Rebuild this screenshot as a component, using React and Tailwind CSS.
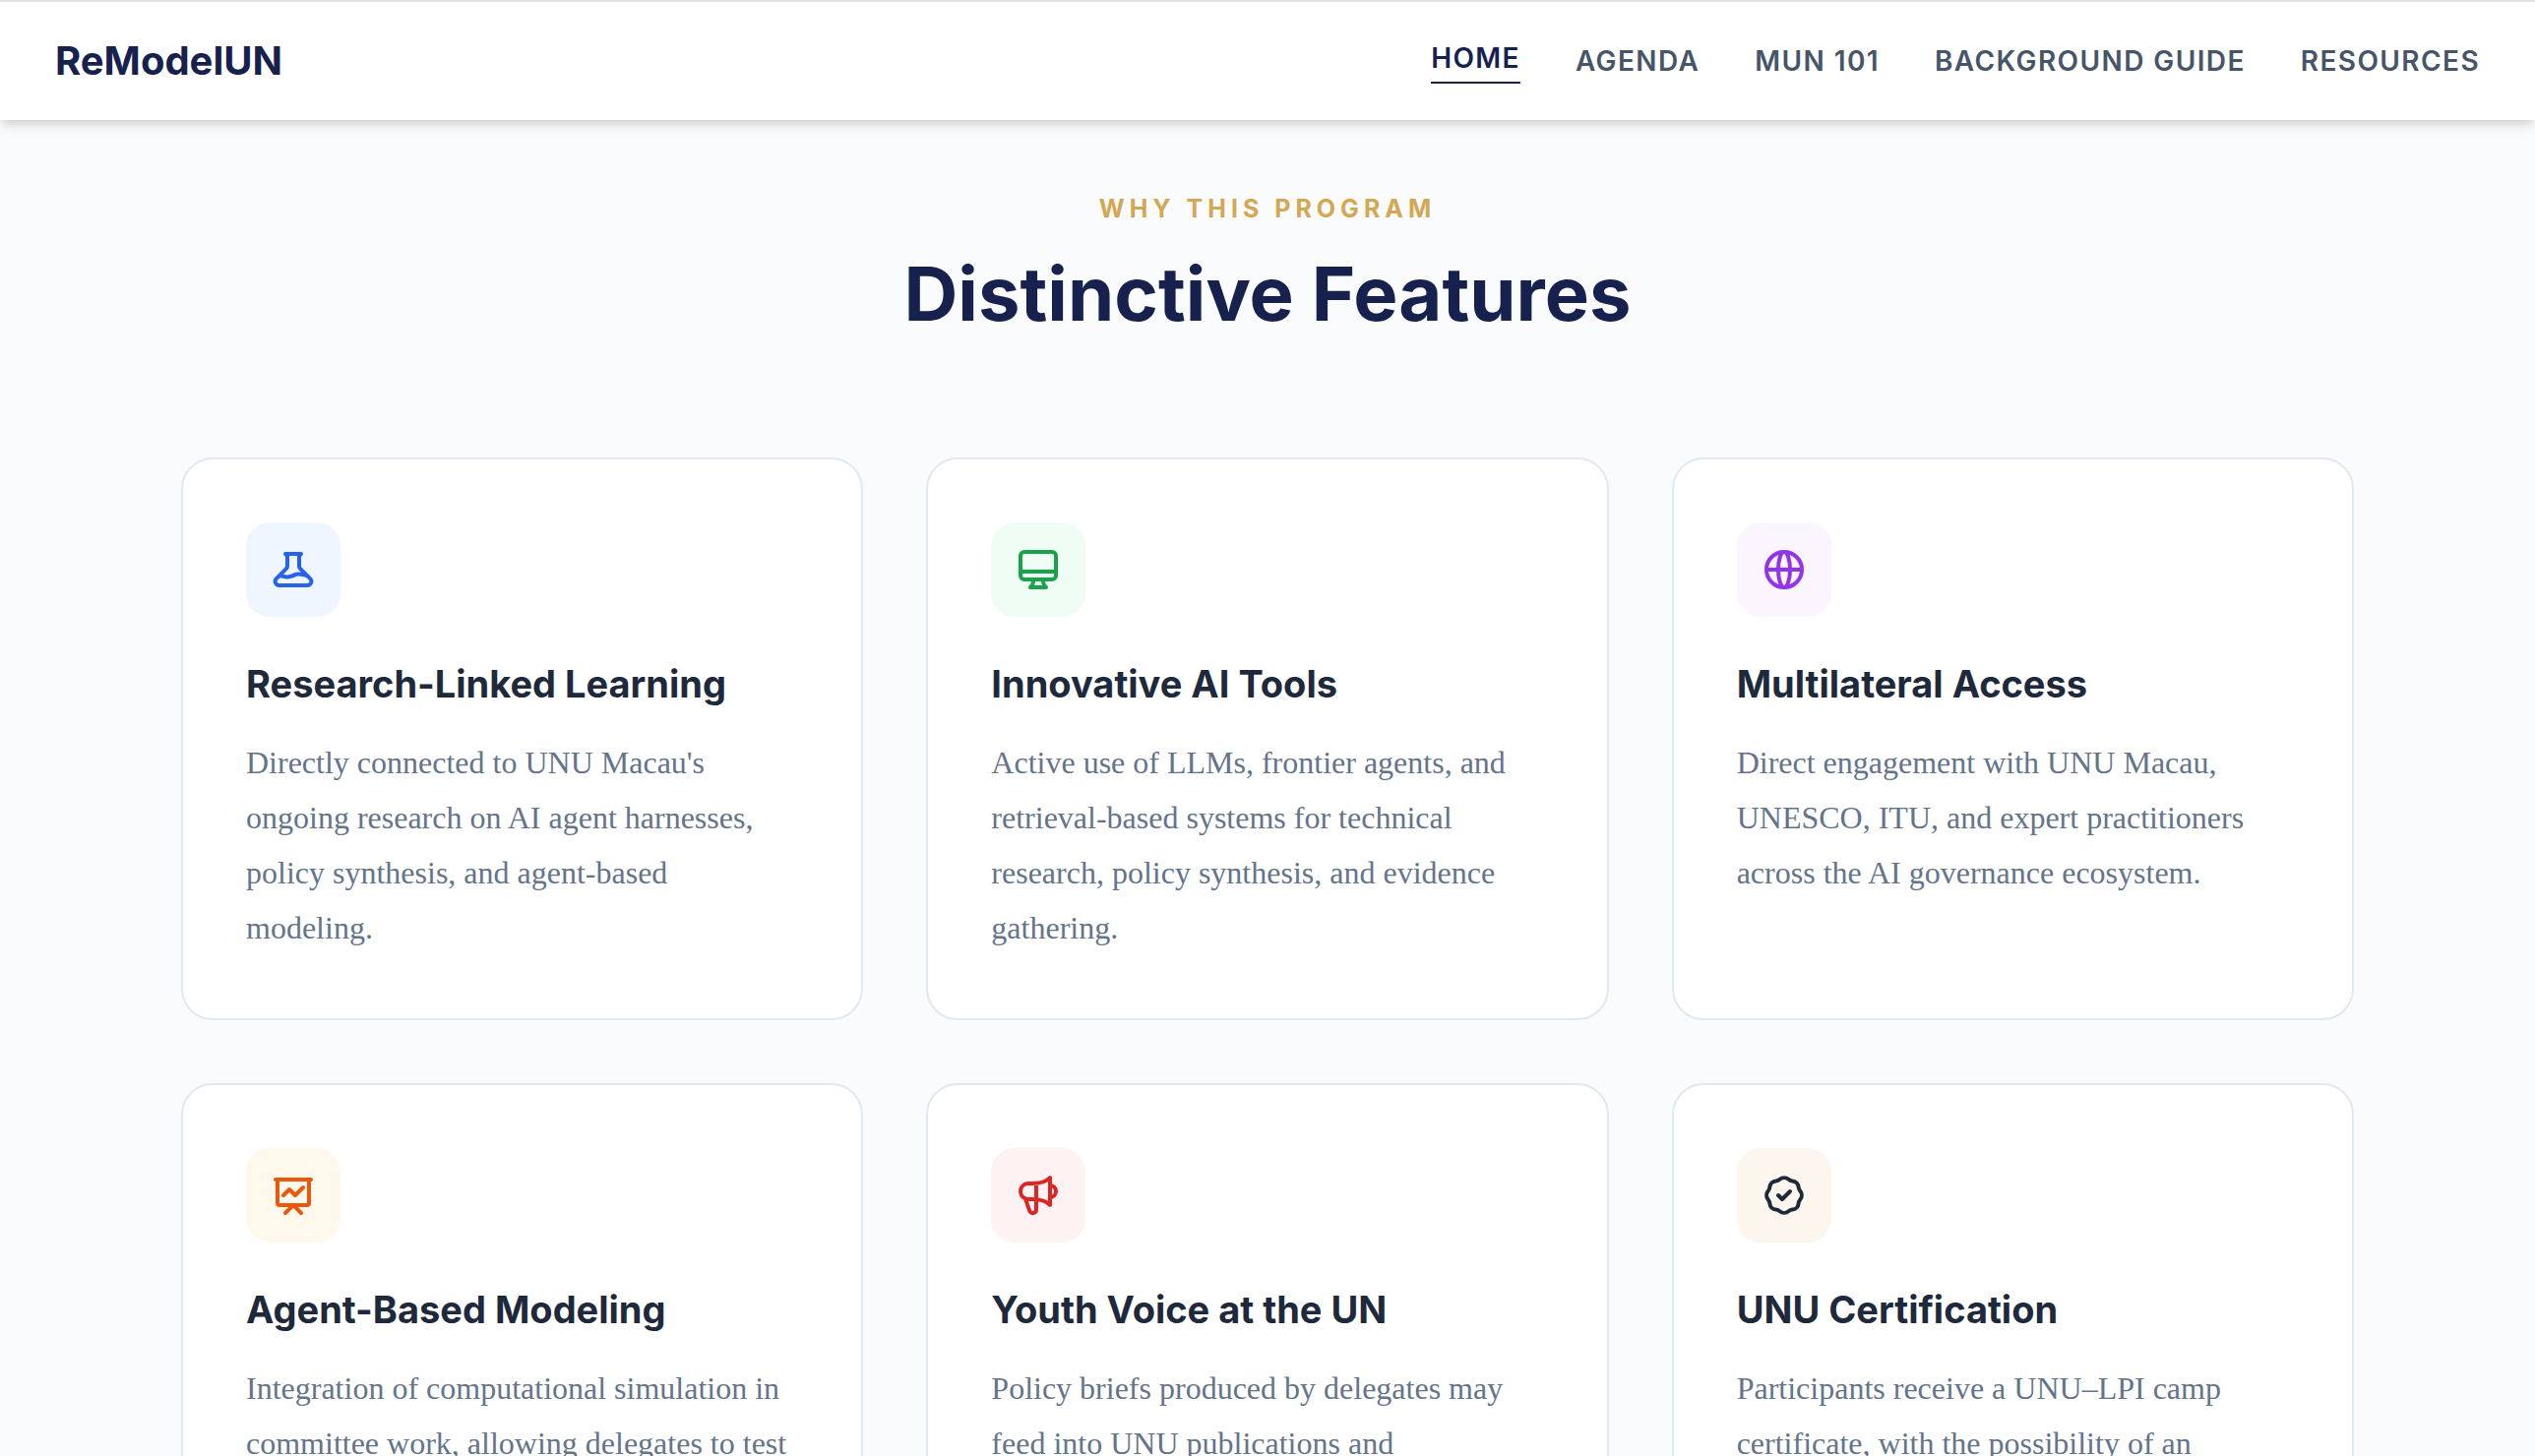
import clsx from 'clsx';
import {
  HiOutlineBadgeCheck,
  HiOutlineBeaker,
  HiOutlineDesktopComputer,
  HiOutlineGlobeAlt,
  HiOutlinePresentationChartLine,
  HiOutlineSpeakerphone,
} from 'react-icons/hi';

const navItems = [
  { label: 'HOME', href: '#home', active: true },
  { label: 'AGENDA', href: '#agenda' },
  { label: 'MUN 101', href: '#mun-101' },
  { label: 'BACKGROUND GUIDE', href: '#background-guide' },
  { label: 'RESOURCES', href: '#resources' },
];

const features = [
  {
    title: 'Research-Linked Learning',
    text: "Directly connected to UNU Macau's ongoing research on AI agent harnesses, policy synthesis, and agent-based modeling.",
    icon: HiOutlineBeaker,
    color: 'bg-[#eff6ff] text-[#2563eb]',
  },
  {
    title: 'Innovative AI Tools',
    text: 'Active use of LLMs, frontier agents, and retrieval-based systems for technical research, policy synthesis, and evidence gathering.',
    icon: HiOutlineDesktopComputer,
    color: 'bg-[#f0fdf4] text-[#16a34a]',
  },
  {
    title: 'Multilateral Access',
    text: 'Direct engagement with UNU Macau, UNESCO, ITU, and expert practitioners across the AI governance ecosystem.',
    icon: HiOutlineGlobeAlt,
    color: 'bg-[#faf5ff] text-[#9333ea]',
  },
  {
    title: 'Agent-Based Modeling',
    text: 'Integration of computational simulation in committee work, allowing delegates to test',
    icon: HiOutlinePresentationChartLine,
    color: 'bg-[#fff8ec] text-[#ea580c]',
  },
  {
    title: 'Youth Voice at the UN',
    text: 'Policy briefs produced by delegates may feed into UNU publications and',
    icon: HiOutlineSpeakerphone,
    color: 'bg-[#fef2f2] text-[#dc2626]',
  },
  {
    title: 'UNU Certification',
    text: 'Participants receive a UNU–LPI camp certificate, with the possibility of an',
    icon: HiOutlineBadgeCheck,
    color: 'bg-[#fcf6ee] text-[#1e293b]',
  },
];

function Header() {
  return (
    <header className="sticky top-0 z-10 flex h-[122px] items-center justify-between border-t-2 border-[#e2e2e2] bg-white px-14 shadow-[0_8px_12px_-2px_rgba(0,0,0,0.1),0_4px_8px_-2px_rgba(0,0,0,0.1)]">
      <a href="#home" className="text-[40px] font-bold text-[#16214d]">
        ReModelUN
      </a>
      <nav className="flex items-center gap-14">
        {navItems.map((item) => (
          <a
            key={item.label}
            href={item.href}
            aria-current={item.active ? 'page' : undefined}
            className={clsx(
              'text-[28px] leading-10 font-semibold tracking-wider',
              item.active ? 'border-b-2 border-[#16214d] pb-1 text-[#16214d]' : 'text-[#475569]'
            )}
          >
            {item.label}
          </a>
        ))}
      </nav>
    </header>
  );
}

function FeatureCard({ feature }) {
  const Icon = feature.icon;

  return (
    <article className="rounded-[32px] border-2 border-[#e2e8f0] bg-white p-16">
      <div className={clsx('mb-10 flex size-24 items-center justify-center rounded-3xl', feature.color)}>
        <Icon className="size-12" aria-hidden="true" />
      </div>
      <h3 className="mb-6 text-[38px] leading-[56px] font-bold text-[#1e293b]">{feature.title}</h3>
      <p className="font-['Liberation_Serif',serif] text-[32px] leading-[56px] text-[#64748b]">{feature.text}</p>
    </article>
  );
}

export default function App() {
  return (
    <div className="min-h-screen bg-[#fafbfd] font-['Inter',sans-serif]">
      <Header />
      <main className="mx-auto max-w-[2304px] px-12 pt-[72px] pb-24">
        <div className="mb-[115px] text-center">
          <p className="text-[25px] leading-9 font-bold tracking-[0.2em] text-[#d4a853]">WHY THIS PROGRAM</p>
          <h2 className="mt-4 text-[76px] leading-[104px] font-bold text-[#16214d]">Distinctive Features</h2>
        </div>
        <div className="grid auto-rows-fr grid-cols-3 gap-16">
          {features.map((feature) => (
            <FeatureCard key={feature.title} feature={feature} />
          ))}
        </div>
      </main>
    </div>
  );
}
